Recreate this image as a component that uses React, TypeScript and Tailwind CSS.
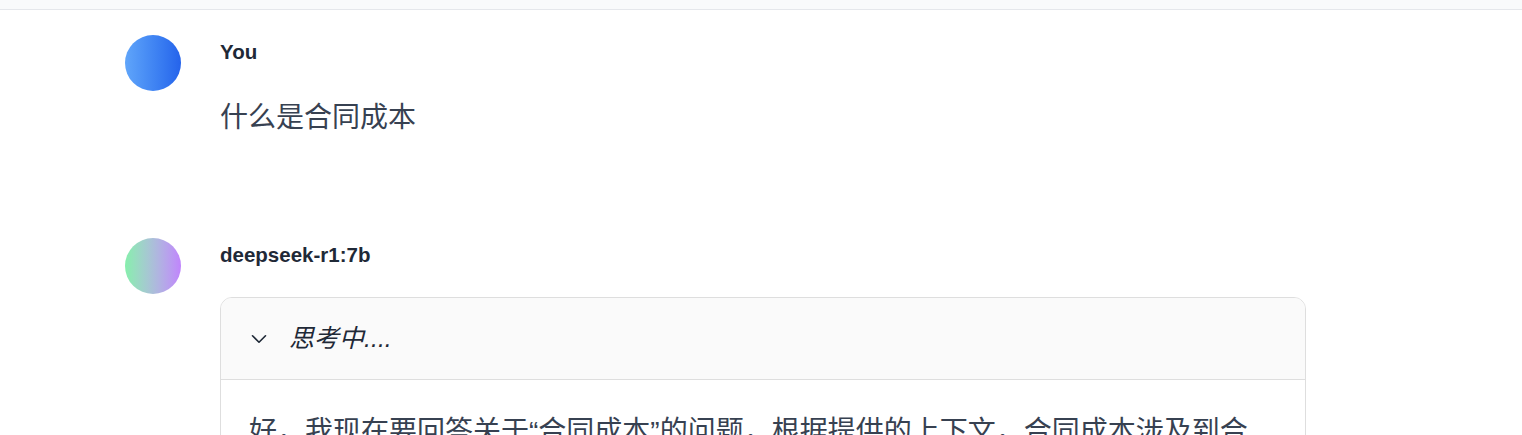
import { ChevronDown } from 'lucide-react'

interface MessageProps {
  name: string
  avatar: string
  children: React.ReactNode
}

const Message: React.FC<MessageProps> = ({ name, avatar, children }) => {
  return (
    <div className="flex gap-[39px]">
      <div className={`w-14 h-14 rounded-full shrink-0 bg-gradient-to-r ${avatar}`}></div>
      <div className="flex-1 min-w-0">
        <div className="mt-[3px] text-[20.5px] leading-7 font-bold text-[#1f2937]">{name}</div>
        {children}
      </div>
    </div>
  )
}

export default function App() {
  return (
    <div
      className="min-h-screen bg-white overflow-hidden"
      style={{ fontFamily: '"Liberation Sans", "Noto Sans CJK SC", sans-serif' }}
    >
      <div className="h-[10px] bg-[#f9fafb] border-b border-[#e5e7eb]"></div>

      <div className="pl-[125px] pt-[25px] w-[1181px] box-content">
        <Message name="You" avatar="from-[#60a5fa] to-[#2563eb]">
          <p className="mt-[31px] text-[28px] leading-[42px] text-[#374151]">什么是合同成本</p>
        </Message>

        <div className="mt-[99px]">
          <Message name="deepseek-r1:7b" avatar="from-[#86efac] to-[#c084fc]">
            <div className="mt-[28px] border border-[#dedede] rounded-xl overflow-hidden">
              <div className="h-[82px] bg-[#fafafa] border-b border-[#dedede] flex items-center pl-[25px] gap-[17px]">
                <ChevronDown size={26} strokeWidth={1.5} className="text-[#1f2937]" />
                <span className="italic text-[25px] text-[#1f2937]">思考中....</span>
              </div>
              <div className="pl-7 pr-8 pt-[27px] pb-6 text-[28px] leading-[49px] text-[#374151]">
                好，我现在要回答关于“合同成本”的问题，根据提供的上下文，合同成本涉及到合同履行过程中发生的各项成本，包括直接成本和间接成本。
              </div>
            </div>
          </Message>
        </div>
      </div>
    </div>
  )
}
